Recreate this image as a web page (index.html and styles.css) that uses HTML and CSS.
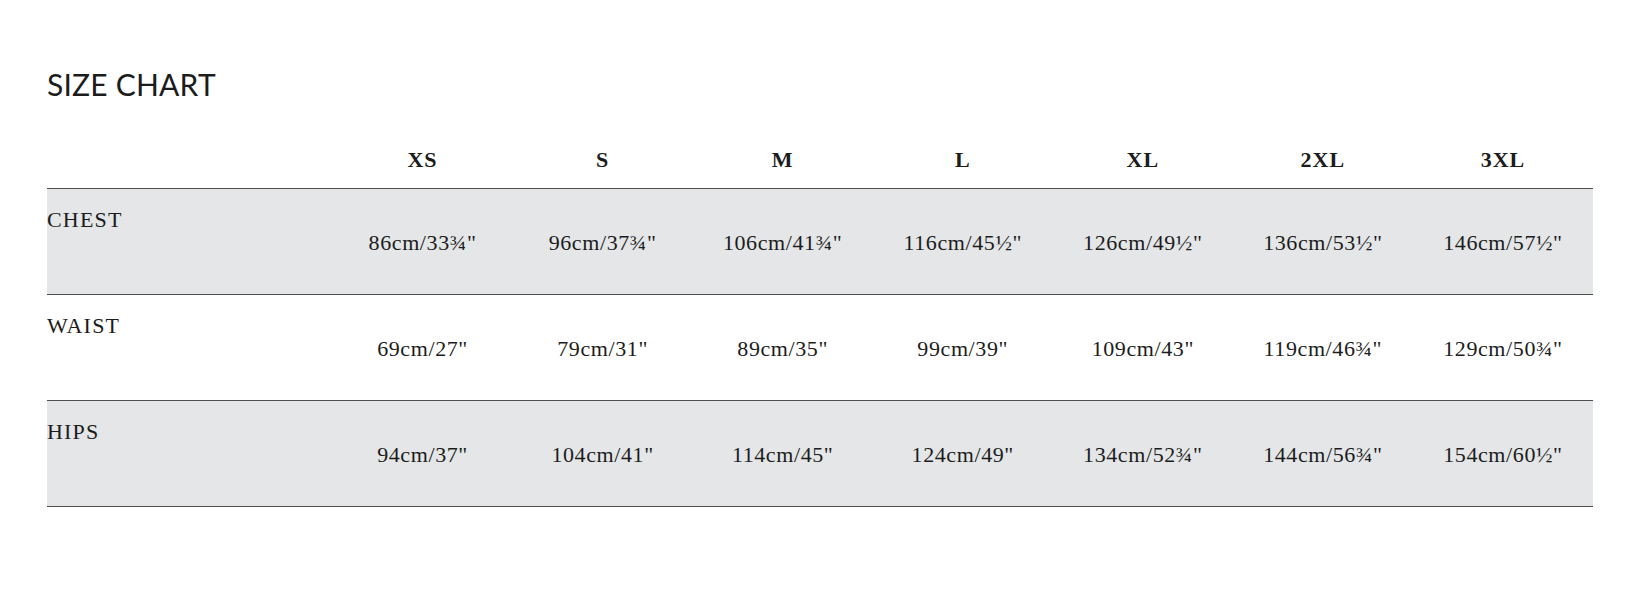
FILE: index.html
```html
<!DOCTYPE html>
<html>
<head>
<meta charset="utf-8">
<link rel="stylesheet" href="styles.css">
</head>
<body>
<div class="page">
  <h1 class="title">SIZE CHART</h1>
  <div class="chart">
    <div class="row head">
      <div class="label"></div>
      <div class="size">XS</div>
      <div class="size">S</div>
      <div class="size">M</div>
      <div class="size">L</div>
      <div class="size">XL</div>
      <div class="size">2XL</div>
      <div class="size">3XL</div>
    </div>
    <div class="row body shaded">
      <div class="label">CHEST</div>
      <div class="val">86cm/33¾"</div>
      <div class="val">96cm/37¾"</div>
      <div class="val">106cm/41¾"</div>
      <div class="val">116cm/45½"</div>
      <div class="val">126cm/49½"</div>
      <div class="val">136cm/53½"</div>
      <div class="val">146cm/57½"</div>
    </div>
    <div class="row body">
      <div class="label">WAIST</div>
      <div class="val">69cm/27"</div>
      <div class="val">79cm/31"</div>
      <div class="val">89cm/35"</div>
      <div class="val">99cm/39"</div>
      <div class="val">109cm/43"</div>
      <div class="val">119cm/46¾"</div>
      <div class="val">129cm/50¾"</div>
    </div>
    <div class="row body shaded">
      <div class="label">HIPS</div>
      <div class="val">94cm/37"</div>
      <div class="val">104cm/41"</div>
      <div class="val">114cm/45"</div>
      <div class="val">124cm/49"</div>
      <div class="val">134cm/52¾"</div>
      <div class="val">144cm/56¾"</div>
      <div class="val">154cm/60½"</div>
    </div>
  </div>
</div>
</body>
</html>
```
FILE: styles.css
```css
html, body {
  margin: 0;
  padding: 0;
  background: #ffffff;
}

.page {
  padding: 0 51px 0 47px;
  color: #1c1c1c;
}

.title {
  margin: 66px 0 0 0;
  font-family: Lato, "Open Sans", sans-serif;
  font-weight: 400;
  font-size: 30px;
  line-height: 36px;
  letter-spacing: 0.2px;
  color: #1c1c1c;
}

.chart {
  margin-top: 46px;
  font-family: "Liberation Serif", "DejaVu Serif", serif;
  font-size: 22px;
  line-height: 24px;
}

.row {
  display: grid;
  grid-template-columns: 285.5px repeat(7, 1fr);
  border-bottom: 1px solid #4e4e4e;
}

.head {
  padding-bottom: 16px;
}

.size {
  text-align: center;
  font-weight: 700;
  letter-spacing: 1px;
}

.body {
  height: 105px;
}

.shaded {
  background: #e4e6e7;
}

.body .label {
  padding-top: 19px;
  letter-spacing: 1.2px;
}

.val {
  text-align: center;
  padding-top: 42px;
  letter-spacing: 0.6px;
}
```
